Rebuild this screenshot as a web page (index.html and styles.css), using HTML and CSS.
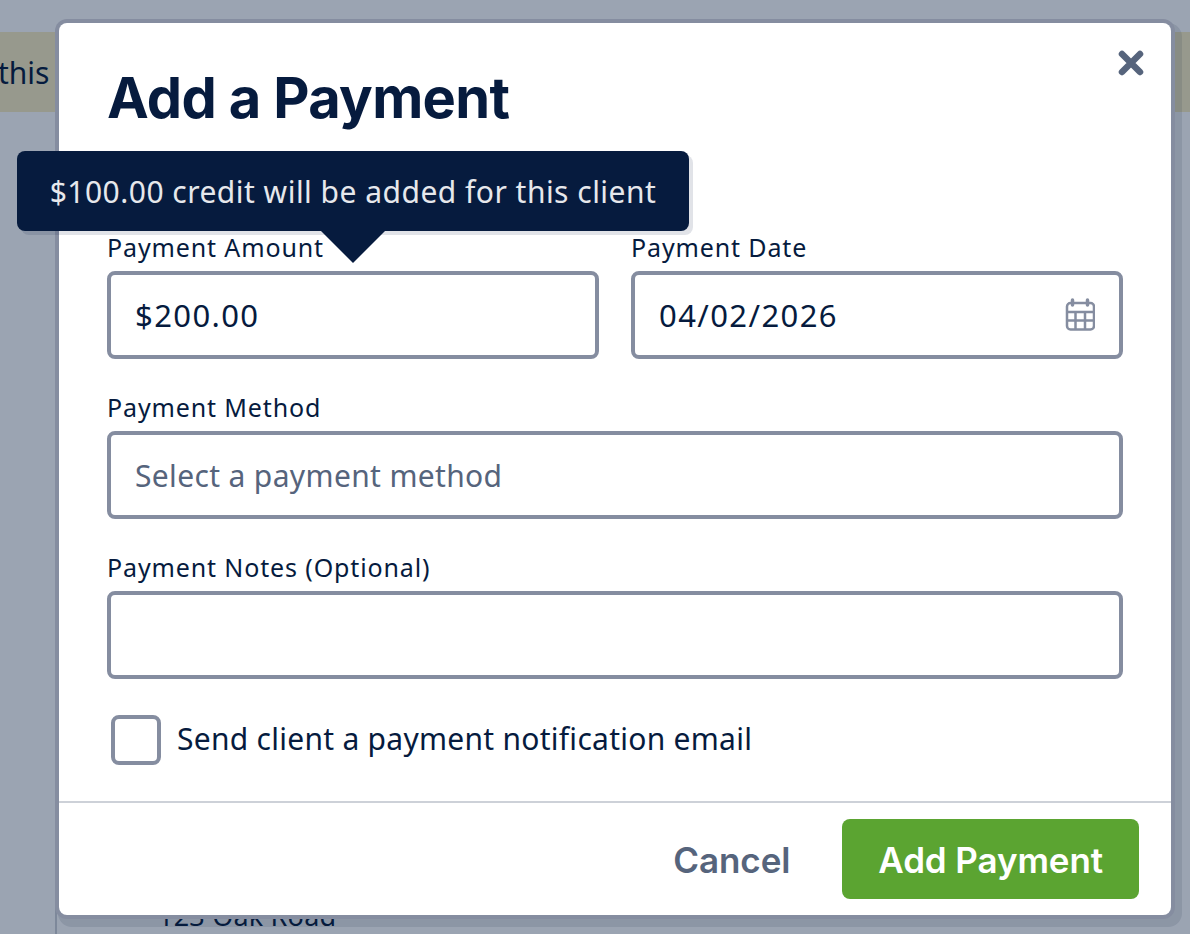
FILE: index.html
```html
<!DOCTYPE html>
<html lang="en">
<head>
<meta charset="utf-8">
<title>Add a Payment</title>
<link rel="stylesheet" href="styles.css">
</head>
<body>
<div class="page">
  <div class="banner"><span class="banner-text">this</span></div>
  <div class="page-rule"></div>
  <div class="address">123 Oak Road</div>
</div>
<div class="overlay"></div>
<div class="modal">
  <button class="close" type="button" aria-label="Close">
    <svg width="26" height="26" viewBox="0 0 26 26"><path d="M4 4L22 22M22 4L4 22" fill="none" stroke="#56647c" stroke-width="6.5" stroke-linecap="round"/></svg>
  </button>
  <div class="modal-body">
    <h1 class="title">Add a Payment</h1>
    <div class="row">
      <div class="field">
        <label class="label">Payment Amount</label>
        <div class="input"><span class="value">$200.00</span></div>
      </div>
      <div class="field">
        <label class="label">Payment Date</label>
        <div class="input"><span class="value">04/02/2026</span>
          <svg class="cal" width="30" height="33" viewBox="0 0 30 33" fill="none" stroke="#858da0" stroke-width="2.5">
            <rect x="2" y="5" width="27" height="26.5" rx="3.5"/>
            <path d="M2 14H29M2 22.5H29M10.5 14V31M20 14V31"/>
            <path d="M7.5 2V7M22.5 2V7" stroke-width="3.5" stroke-linecap="round"/>
          </svg>
        </div>
      </div>
    </div>
    <div class="field">
      <label class="label">Payment Method</label>
      <div class="input"><span class="placeholder">Select a payment method</span></div>
    </div>
    <div class="field">
      <label class="label">Payment Notes (Optional)</label>
      <div class="input"></div>
    </div>
    <label class="check"><span class="box"></span><span class="check-text">Send client a payment notification email</span></label>
  </div>
  <div class="footer">
    <button class="cancel" type="button">Cancel</button>
    <button class="submit" type="button">Add Payment</button>
  </div>
</div>
<div class="tooltip">$100.00 credit will be added for this client</div>
</body>
</html>
```
FILE: styles.css
```css
* { box-sizing: border-box; }
html, body { margin: 0; height: 100%; }
body {
  position: relative;
  width: 1190px;
  height: 934px;
  overflow: hidden;
  background: #fff;
  font-family: "Noto Sans", sans-serif;
  color: #061b3e;
}
.page { position: absolute; inset: 0; }
.banner {
  position: absolute;
  left: 0; right: 0; top: 32px;
  height: 80px;
  background: #f8edc2;
  display: flex;
  align-items: center;
}
.banner-text {
  margin-left: -2px;
  font-size: 30px;
  color: #061b3e;
}
.page-rule {
  position: absolute;
  left: 55px; top: 112px; bottom: 0;
  width: 2px;
  background: #cdd1d8;
}
.address {
  position: absolute;
  left: 158px; top: 900px;
  font-size: 27px;
  line-height: 32px;
  letter-spacing: .2px;
  color: #061b3e;
}
.overlay {
  position: absolute;
  inset: 0;
  background: rgba(6, 27, 62, .4);
}
.modal {
  position: absolute;
  left: 59px; top: 23px;
  width: 1112px;
  height: 892px;
  background: #fff;
  border-radius: 8px;
  box-shadow: 0 0 0 4px #858da0, 5px 6px 0 6px rgba(6, 27, 62, .1);
  display: flex;
  flex-direction: column;
}
.close {
  position: absolute;
  top: 27px; right: 27px;
  padding: 0;
  border: 0;
  background: none;
  display: flex;
}
.modal-body {
  flex: 1;
  padding: 39px 48px 0;
  display: flex;
  flex-direction: column;
  gap: 32px;
}
.title {
  margin: 0 0 65px;
  font-family: Inter, sans-serif;
  font-size: 56px;
  line-height: 72px;
  font-weight: 700;
  letter-spacing: -.65px;
  color: #061b3e;
}
.row { display: grid; grid-template-columns: 492px 492px; gap: 32px; }
.field { display: flex; flex-direction: column; }
.label {
  font-size: 25px;
  line-height: 32px;
  margin-bottom: 8px;
  letter-spacing: .87px;
}
.input {
  height: 88px;
  border: 4px solid #858da0;
  border-radius: 8px;
  padding: 0 24px;
  display: flex;
  align-items: center;
  justify-content: space-between;
  background: #fff;
}
.value { font-size: 31px; letter-spacing: 1.4px; }
.placeholder { color: #56647c; font-size: 30px; letter-spacing: .35px; }
.cal { flex: none; margin-bottom: 2px; }
.check { display: flex; align-items: center; gap: 16px; margin-left: 4px; margin-top: 4px; }
.box {
  width: 50px; height: 50px;
  border: 4px solid #858da0;
  border-radius: 8px;
  background: #fff;
}
.check-text { font-size: 30px; letter-spacing: .27px; padding-bottom: 3px; }
.footer {
  height: 114px;
  flex: none;
  border-top: 2px solid #cdd1d8;
  display: flex;
  justify-content: flex-end;
  align-items: center;
  padding: 0 32px;
  gap: 52px;
}
.cancel, .submit {
  font-family: Inter, sans-serif;
  font-size: 35px;
  font-weight: 600;
  letter-spacing: -.1px;
  border: 0;
  background: none;
  padding: 2px 0 0;
}
.cancel { color: #56647c; }
.submit {
  height: 80px;
  padding: 2px 36px 0;
  border-radius: 8px;
  background: #5ba431;
  color: #fff;
}
.tooltip {
  position: absolute;
  left: 17px; top: 151px;
  width: 672px; height: 80px;
  border-radius: 8px;
  background: #061b3e;
  box-shadow: 4px 4px 0 rgba(6, 27, 62, .12);
  color: #e6e8ec;
  font-size: 30px;
  letter-spacing: .48px;
  display: flex;
  align-items: center;
  justify-content: center;
}
.tooltip::after {
  content: "";
  position: absolute;
  left: 304px; top: 80px;
  border: 32px solid transparent;
  border-top-color: #061b3e;
  border-bottom: 0;
}
```
